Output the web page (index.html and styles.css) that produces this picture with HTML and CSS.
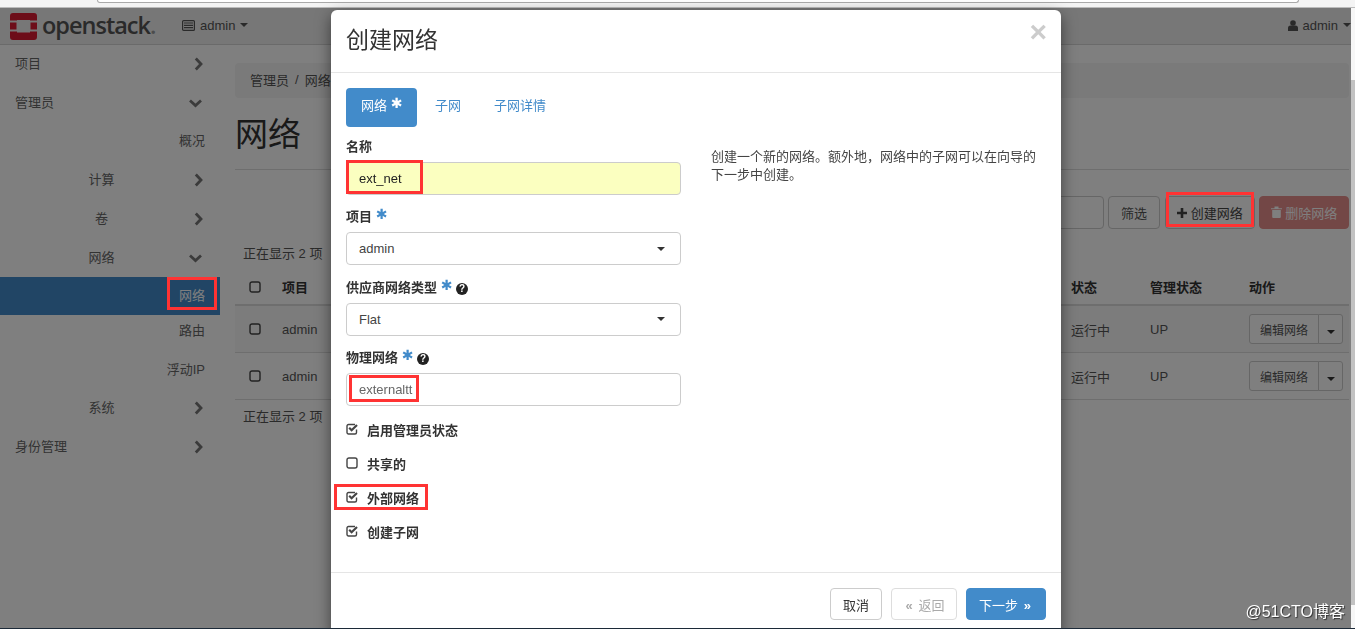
FILE: index.html
```html
<!DOCTYPE html>
<html lang="zh-CN">
<head>
  <meta charset="UTF-8">
  <title>创建网络</title>
  <link rel="stylesheet" href="styles.css">
</head>
<body>
  <svg class="defs" width="0" height="0">
    <symbol id="chev-right" viewBox="0 0 17 14">
      <path d="M8.800 1.500 14 7 8.800 12.500" fill="none" stroke="currentColor" stroke-width="2.800"/>
    </symbol>
    <symbol id="chev-down" viewBox="0 0 17 14">
      <path d="M6 4.500 11.500 9.500 17 4.500" fill="none" stroke="currentColor" stroke-width="2.800" transform="translate(-3)"/>
    </symbol>
    <symbol id="box" viewBox="0 0 12 12">
      <rect x="1" y="1" width="10" height="10" rx="2" fill="none" stroke="currentColor" stroke-width="1.400"/>
    </symbol>
    <symbol id="box-checked" viewBox="0 0 12 12">
      <path d="M10.500 6.500V9.500a1.500 1.500 0 0 1-1.500 1.500H2.500A1.500 1.500 0 0 1 1 9.500V3a1.500 1.500 0 0 1 1.500-1.500H9" fill="none" stroke="currentColor" stroke-width="1.400"/>
      <path d="M3.200 4.800 5.600 7.200 11 2" fill="none" stroke="currentColor" stroke-width="2.200"/>
    </symbol>
  </svg>

  <div class="chrome"><div class="urlbar"></div></div>

  <header class="navbar">
    <div class="logo">
      <svg class="logo-mark" width="27" height="27" viewBox="0 0 27 27">
        <path d="M3 0H24a3 3 0 0 1 3 3V7.500H20V7H7V7.500H0V3A3 3 0 0 1 3 0Z" fill="#da1a32"/>
        <path d="M0 9.500H6.500V16.500H0ZM20.500 9.500H27V16.500H20.500Z" fill="#da1a32"/>
        <path d="M0 18.500H7V19.500H20V18.500H27V24a3 3 0 0 1-3 3H3a3 3 0 0 1-3-3Z" fill="#da1a32"/>
      </svg>
      <span class="logo-word">openstack<span class="logo-dot">.</span></span>
    </div>
    <div class="nav-project">
      <svg width="13" height="11" viewBox="0 0 13 11">
        <rect x=".6" y=".6" width="11.800" height="9.800" rx="1" fill="none" stroke="currentColor" stroke-width="1.200"/>
        <path d="M2 3h9M2 5.300h9M2 7.600h9" stroke="currentColor" stroke-width="1.200"/>
      </svg>
      <span>admin</span><i class="caret"></i>
    </div>
    <div class="nav-user">
      <svg width="10" height="11" viewBox="0 0 10 11">
        <circle cx="5" cy="3" r="2.800" fill="currentColor"/>
        <path d="M0 11V8a2.500 2.500 0 0 1 2.500-2.500h5A2.500 2.500 0 0 1 10 8v3Z" fill="currentColor"/>
      </svg>
      <span>admin</span><i class="caret"></i>
    </div>
  </header>

  <div class="page">
    <nav class="sidebar">
      <a class="side-row"><span class="side-label">项目</span><svg class="chev"><use href="#chev-right"/></svg></a>
      <a class="side-row"><span class="side-label">管理员</span><svg class="chev"><use href="#chev-down"/></svg></a>
      <a class="side-row lvl3"><span class="side-label">概况</span></a>
      <a class="side-row lvl2"><span class="side-label">计算</span><svg class="chev"><use href="#chev-right"/></svg></a>
      <a class="side-row lvl2"><span class="side-label">卷</span><svg class="chev"><use href="#chev-right"/></svg></a>
      <a class="side-row lvl2"><span class="side-label">网络</span><svg class="chev"><use href="#chev-down"/></svg></a>
      <a class="side-row lvl3 active"><span class="side-label">网络</span><i class="mark mark-side"></i></a>
      <a class="side-row lvl3"><span class="side-label">路由</span></a>
      <a class="side-row lvl3"><span class="side-label">浮动IP</span></a>
      <a class="side-row lvl2"><span class="side-label">系统</span><svg class="chev"><use href="#chev-right"/></svg></a>
      <a class="side-row"><span class="side-label">身份管理</span><svg class="chev"><use href="#chev-right"/></svg></a>
    </nav>

    <main class="main">
      <div class="breadcrumb"><span>管理员</span><span class="sep">/</span><span>网络</span></div>
      <div class="page-header"><h1>网络</h1></div>

      <div class="tools">
        <input class="filter-input" type="text">
        <button class="btn">筛选</button>
        <button class="btn btn-create">
          <svg width="10" height="10" viewBox="0 0 10 10"><path d="M5 0v10M0 5h10" stroke="currentColor" stroke-width="2.600"/></svg>
          创建网络<i class="mark mark-create"></i>
        </button>
        <button class="btn btn-delete">
          <svg width="11" height="12" viewBox="0 0 11 12"><path d="M0 2.200h11v1H0ZM3.500 2.200V.6h4v1.600M1.200 4h8.600v7a1 1 0 0 1-1 1H2.200a1 1 0 0 1-1-1Z" fill="currentColor"/></svg>
          删除网络
        </button>
      </div>

      <div class="count">正在显示 2 项</div>
      <table class="net-table">
        <colgroup>
          <col class="c-check"><col class="c-project"><col class="c-status"><col class="c-admin"><col class="c-action">
        </colgroup>
        <thead>
          <tr>
            <th><svg class="tick"><use href="#box"/></svg></th>
            <th>项目</th><th>状态</th><th>管理状态</th><th>动作</th>
          </tr>
        </thead>
        <tbody>
          <tr class="odd">
            <td><svg class="tick"><use href="#box"/></svg></td>
            <td>admin</td><td>运行中</td><td>UP</td>
            <td><div class="btn-split"><button class="btn-edit">编辑网络</button><button class="btn-more"><i class="caret"></i></button></div></td>
          </tr>
          <tr>
            <td><svg class="tick"><use href="#box"/></svg></td>
            <td>admin</td><td>运行中</td><td>UP</td>
            <td><div class="btn-split"><button class="btn-edit">编辑网络</button><button class="btn-more"><i class="caret"></i></button></div></td>
          </tr>
        </tbody>
      </table>
      <div class="count count-bottom">正在显示 2 项</div>
    </main>
  </div>

  <div class="backdrop"></div>

  <div class="modal">
    <div class="modal-header">
      <h4>创建网络</h4>
      <span class="close">×</span>
    </div>
    <div class="modal-body">
      <ul class="tabs">
        <li class="tab on">网络 <span class="star">✱</span></li>
        <li class="tab">子网</li>
        <li class="tab">子网详情</li>
      </ul>
      <div class="columns">
        <form class="form-col">
          <div class="group">
            <label>名称</label>
            <div class="field">
              <input class="control control-auto" type="text" value="ext_net">
              <i class="mark mark-name"></i>
            </div>
          </div>
          <div class="group">
            <label>项目 <span class="star">✱</span></label>
            <div class="field"><div class="control">admin<i class="caret"></i></div></div>
          </div>
          <div class="group">
            <label>供应商网络类型 <span class="star">✱</span> <span class="help">?</span></label>
            <div class="field"><div class="control">Flat<i class="caret"></i></div></div>
          </div>
          <div class="group">
            <label>物理网络 <span class="star">✱</span> <span class="help">?</span></label>
            <div class="field">
              <input class="control control-grey" type="text" value="externaltt">
              <i class="mark mark-phys"></i>
            </div>
          </div>
          <div class="check-list">
            <div class="check"><svg class="tick"><use href="#box-checked"/></svg>启用管理员状态</div>
            <div class="check"><svg class="tick"><use href="#box"/></svg>共享的</div>
            <div class="check"><svg class="tick"><use href="#box-checked"/></svg>外部网络<i class="mark mark-ext"></i></div>
            <div class="check"><svg class="tick"><use href="#box-checked"/></svg>创建子网</div>
          </div>
        </form>
        <p class="help-text">创建一个新的网络。额外地，网络中的子网可以在向导的下一步中创建。</p>
      </div>
    </div>
    <div class="modal-footer">
      <button class="btn-m">取消</button>
      <button class="btn-m btn-back"><span class="quote">«</span> 返回</button>
      <button class="btn-m btn-next">下一步 <span class="quote">»</span></button>
    </div>
  </div>

  <div class="scrollbar"><div class="scroll-thumb"></div></div>
  <div class="watermark">@51CTO博客</div>
  <div class="taskbar"></div>
</body>
</html>
```

FILE: styles.css
```css
html, body {
  height: 629px;
  overflow: hidden;
}

body {
  margin: 0;
  font-family: "Liberation Sans", "Noto Sans CJK SC", sans-serif;
  font-size: 13px;
  color: #555;
  background: #fff;
}

.defs {
  position: absolute;
}

button, input {
  font-family: inherit;
  font-size: 13px;
}

.caret {
  display: inline-block;
  width: 0;
  height: 0;
  border-top: 4px solid currentColor;
  border-left: 4px solid transparent;
  border-right: 4px solid transparent;
}

/* red boxes drawn on the screenshot, above the backdrop */
.mark {
  position: absolute;
  z-index: 11;
  border: 3px solid #f33;
  box-sizing: border-box;
}

.chrome {
  height: 7px;
  background: #f4f4f4;
  border-bottom: 1px solid #bbb;
}

.urlbar {
  width: 1200px;
  height: 2px;
  margin-left: 97px;
  background: #fff;
  border: 1px solid #aaa;
  border-top: none;
  border-radius: 0 0 3px 3px;
}

.navbar {
  display: flex;
  align-items: center;
  height: 37px;
  padding-bottom: 2px;
  box-sizing: border-box;
  background: #eee;
  border-bottom: 1px solid #d4d4d4;
}

.logo {
  display: flex;
  align-items: center;
  width: 182px;
  padding-left: 10px;
  box-sizing: border-box;
}

.logo-mark {
  margin-top: 2px;
}

.logo-word {
  margin-left: 5px;
  font-family: "Open Sans", sans-serif;
  font-size: 23.5px;
  font-weight: 600;
  letter-spacing: -1px;
  color: #555;
}

.logo-dot {
  color: #999;
}

.nav-project {
  display: flex;
  align-items: center;
  gap: 5px;
  color: #555;
}

.nav-user {
  display: flex;
  align-items: center;
  gap: 5px;
  margin-left: auto;
  margin-right: 4px;
  color: #555;
}

.page {
  display: flex;
}

.sidebar {
  width: 220px;
  flex-shrink: 0;
  margin-top: -2px;
}

.side-row {
  position: relative;
  display: flex;
  align-items: center;
  height: 38.75px;
  padding: 0 15px;
  box-sizing: border-box;
  color: #666;
}

.side-row.lvl2 .side-label {
  text-align: center;
}

.side-row.lvl3 .side-label {
  text-align: right;
}

.side-row.active {
  height: 38px;
  margin: 1.5px 0 -5px;
  padding-bottom: 4px;
  background: #428bca;
  color: #fff;
}

.side-label {
  flex: 1;
}

.chev {
  width: 17px;
  height: 14px;
  margin-top: 3px;
  color: #777;
  transform: translateX(-1px);
}

.mark-side {
  left: 167px;
  top: 0;
  width: 50px;
  height: 33px;
}

.main {
  flex: 1;
  padding: 18px 6px 0 15px;
  min-width: 0;
}

.breadcrumb {
  display: flex;
  align-items: center;
  height: 35px;
  padding: 0 0 2px 15px;
  box-sizing: border-box;
  background: #f5f5f5;
  border-radius: 4px;
  color: #555;
}

.sep {
  margin: 0 6px;
}

.page-header {
  height: 71px;
  border-bottom: 1px solid #ddd;
}

h1 {
  margin: 0;
  padding-top: 15px;
  font-size: 33px;
  font-weight: 400;
  line-height: 44px;
  color: #333;
}

.tools {
  display: flex;
  justify-content: flex-end;
  gap: 4px;
  margin-top: 26px;
}

.filter-input {
  width: 300px;
  height: 33px;
  box-sizing: border-box;
  background: #fff;
  border: 1px solid #ccc;
  border-radius: 4px;
}

.btn {
  position: relative;
  height: 33px;
  padding: 0 12px;
  background: #fff;
  border: 1px solid #ccc;
  border-radius: 4px;
  color: #555;
}

.btn-create {
  width: 90px;
  padding: 0;
  margin-left: 1px;
  color: #444;
}

.btn-delete {
  width: 90px;
  padding: 0;
  background: #d9534f;
  border-color: #d9534f;
  color: #fff;
  opacity: .65;
}

.mark-create {
  left: 0;
  top: -5px;
  width: 88px;
  height: 35px;
}

.count {
  margin-top: 15px;
  padding-left: 8px;
  line-height: 20px;
}

.count-bottom {
  margin-top: 7px;
}

.net-table {
  width: 1114px;
  margin-top: 5px;
  table-layout: fixed;
  border-collapse: collapse;
}

.c-check { width: 39px; }
.c-status { width: 79px; }
.c-admin { width: 99px; }
.c-action { width: 108px; }

.net-table th {
  height: 35px;
  padding: 0 8px;
  text-align: left;
  color: #333;
  border-bottom: 2px solid #ddd;
}

.net-table td {
  padding: 8px;
  border-bottom: 1px solid #ddd;
}

.net-table td:last-child {
  padding-right: 0;
}

.net-table tr.odd {
  background: #f9f9f9;
}

.tick {
  display: block;
  width: 12px;
  height: 12px;
  color: #444;
}

.net-table .tick {
  margin-left: 6px;
}

.btn-split {
  display: flex;
  height: 30px;
}

.btn-edit {
  flex-shrink: 0;
  width: 70px;
  padding: 0;
  font-size: 12px;
  background: #fff;
  border: 1px solid #ccc;
  border-radius: 3px 0 0 3px;
  color: #555;
}

.btn-more {
  flex-shrink: 0;
  width: 25px;
  margin-left: -1px;
  padding: 0;
  background: #fff;
  border: 1px solid #ccc;
  border-radius: 0 3px 3px 0;
  color: #333;
}

.backdrop {
  position: fixed;
  z-index: 10;
  left: 0;
  right: 0;
  top: 8px;
  bottom: 0;
  background: rgba(0, 0, 0, .5);
}

.modal {
  position: absolute;
  z-index: 20;
  left: 331px;
  top: 10px;
  width: 730px;
  background: #fff;
  border-radius: 6px;
  box-shadow: 0 5px 15px rgba(0, 0, 0, .5);
  color: #333;
}

.modal-header {
  display: flex;
  justify-content: space-between;
  height: 62px;
  padding: 0 14px 0 15px;
  border-bottom: 1px solid #e5e5e5;
}

h4 {
  margin: 0;
  font-size: 23px;
  font-weight: 400;
  line-height: 61px;
  color: #333;
}

.close {
  margin-top: 7px;
  font-size: 30px;
  font-weight: 700;
  line-height: 30px;
  color: #ccc;
}

.modal-body {
  height: 499px;
  padding: 15px 15px 0;
  box-sizing: border-box;
}

.tabs {
  display: flex;
  margin: 0 0 10px;
  padding: 0;
  list-style: none;
}

.tab {
  height: 39px;
  padding: 0 15px 0 18px;
  line-height: 36px;
  color: #428bca;
}

.tab.on {
  width: 71px;
  padding: 0 0 0 15px;
  box-sizing: border-box;
  background: #428bca;
  border-radius: 4px;
  color: #fff;
}

.star {
  font-family: "DejaVu Sans", sans-serif;
  font-size: 14px;
  line-height: 0;
  vertical-align: 2px;
  color: #428bca;
}

.tab.on .star {
  color: #fff;
}

.columns {
  display: flex;
  gap: 30px;
}

.form-col {
  width: 335px;
  flex-shrink: 0;
}

.group {
  margin-bottom: 12.33px;
}

.group label {
  display: block;
  height: 20px;
  margin-bottom: 5px;
  line-height: 20px;
  font-weight: 700;
  color: #333;
}

.help {
  display: inline-block;
  width: 12px;
  height: 12px;
  border-radius: 50%;
  background: #222;
  color: #fff;
  font-size: 10px;
  line-height: 12px;
  text-align: center;
}

.field {
  position: relative;
}

.control {
  display: flex;
  align-items: center;
  justify-content: space-between;
  width: 100%;
  height: 33px;
  padding: 0 12px;
  box-sizing: border-box;
  background: #fff;
  border: 1px solid #ccc;
  border-radius: 4px;
  color: #444;
}

.control-auto {
  background: #fbffc0;
  color: #222;
}

.control-grey {
  color: #666;
}

.control .caret {
  color: #333;
  margin-right: 3px;
}

.mark-name {
  left: 0;
  top: -2px;
  width: 77px;
  height: 34px;
}

.mark-phys {
  left: 3px;
  top: 2px;
  width: 70px;
  height: 27px;
}

.check-list {
  margin-top: -6px;
}

.check {
  position: relative;
  display: flex;
  align-items: center;
  gap: 9px;
  height: 34px;
  font-weight: 700;
}

.mark-ext {
  left: -12px;
  top: 4px;
  width: 94px;
  height: 26px;
}

.help-text {
  margin: 11px 0 0;
  line-height: 18px;
  color: #444;
}

.modal-footer {
  display: flex;
  justify-content: flex-end;
  gap: 9px;
  padding: 15px;
  border-top: 1px solid #e5e5e5;
}

.btn-m {
  height: 32px;
  padding: 0 12px;
  background: #fff;
  border: 1px solid #ccc;
  border-radius: 4px;
  color: #333;
}

.btn-back {
  width: 66px;
  padding: 0;
  border-color: #ddd;
  color: #aaa;
}

.btn-next {
  width: 80px;
  padding: 0;
  background: #428bca;
  border-color: #428bca;
  color: #fff;
}

.quote {
  margin: 0 2px;
  font-weight: 700;
}

.scrollbar {
  position: fixed;
  z-index: 30;
  right: 0;
  top: 8px;
  bottom: 0;
  width: 4px;
  background: #f7f7f7;
}

.scroll-thumb {
  height: 525px;
  margin-top: 72px;
  background: #c2c2c2;
}

.watermark {
  position: fixed;
  z-index: 30;
  right: 10px;
  bottom: 6px;
  font-size: 16px;
  line-height: 22px;
  color: #fff;
  text-shadow: 1px 1px 1px #333;
}

.taskbar {
  position: fixed;
  z-index: 40;
  left: 0;
  right: 0;
  bottom: 0;
  height: 1px;
  background: #1c2a38;
}
```
